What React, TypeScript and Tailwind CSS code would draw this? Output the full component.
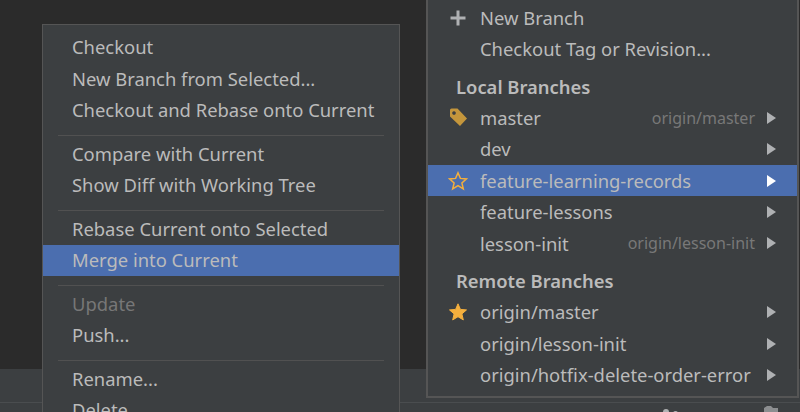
import React from 'react';

const font = "font-['Noto_Sans',sans-serif]";

type Row = { label: string; muted?: boolean; active?: boolean };

const leftGroups: Row[][] = [
    [{ label: 'Checkout' }, { label: 'New Branch from Selected...' }, { label: 'Checkout and Rebase onto Current' }],
    [{ label: 'Compare with Current' }, { label: 'Show Diff with Working Tree' }],
    [{ label: 'Rebase Current onto Selected' }, { label: 'Merge into Current', active: true }],
    [{ label: 'Update', muted: true }, { label: 'Push...' }],
    [{ label: 'Rename...' }, { label: 'Delete' }],
];

const Plus = () => (
    <svg width="16" height="16" viewBox="0 0 16 16" className="text-[#afb1b3]">
        <path d="M8 0.5v15M0.5 8h15" stroke="currentColor" strokeWidth="3" fill="none" />
    </svg>
);

const Tag = () => (
    <svg width="19" height="19" viewBox="0 0 19 19">
        <path
            fillRule="evenodd"
            fill="#c4963c"
            d="M2.5 0.5h6L18 10.5l-7 7.5L1 8.5V2a1.5 1.5 0 0 1 1.5-1.5zM5 3.2a1.8 1.8 0 1 0 .01 0z"
        />
    </svg>
);

const StarIcon = ({ filled }: { filled?: boolean }) => (
    <svg width="20" height="20" viewBox="0 0 20 20">
        <path
            d="M10 1.8l2.4 5.6 6.1.5-4.6 4 1.4 6L10 14.7l-5.3 3.2 1.4-6-4.6-4 6.1-.5z"
            fill={filled ? '#f4af3d' : 'none'}
            stroke="#f4af3d"
            strokeWidth={filled ? 1 : 1.5}
        />
    </svg>
);

const Arrow = ({ active }: { active?: boolean }) => (
    <svg width="9" height="12" viewBox="0 0 9 12" className="shrink-0">
        <path d="M0 0l9 6-9 6z" fill={active ? '#ffffff' : '#afb1b3'} />
    </svg>
);

function BranchRow({ icon, label, remote, active }: { icon?: React.ReactNode; label: string; remote?: string; active?: boolean }) {
    return (
        <div className={`flex h-[31.4px] items-center pr-[21px] ${active ? 'bg-[#4b6eaf]' : ''}`}>
            <div className="flex w-[52px] shrink-0 justify-end pr-[12px]">{icon}</div>
            <span className="flex-1 whitespace-nowrap">{label}</span>
            {remote && <span className="mr-[12px] text-[16px] text-[#787878]">{remote}</span>}
            <Arrow active={active} />
        </div>
    );
}

const Heading = ({ children }: { children: string }) => (
    <div className="flex h-[31.4px] items-center pl-[28px] font-semibold">{children}</div>
);

export default function App() {
    return (
        <div className={`relative flex h-[412px] w-[800px] flex-col overflow-hidden bg-[#2b2b2b] text-[18.4px] text-[#bbbbbb] ${font}`}>
            <div className="flex-1" />
            <div className="h-[34px] border-b border-[#4a4d4f] bg-[#3c3f41]" />
            <div className="relative h-[9px] bg-[#3c3f41]">
                {/* tops of the toolbar icons, clipped by the window */}
                <div className="absolute left-[663px] top-[6px] h-[6px] w-[6px] rounded-full bg-[#afb1b3]" />
                <div className="absolute left-[673px] top-[8px] h-[6px] w-[5px] rounded-full bg-[#afb1b3]" />
                <svg width="16" height="6" viewBox="0 0 16 6" className="absolute left-[763px] top-[3px]">
                    <path d="M1 6V2l3-2h4l2 2h5v4z" fill="#8c8e90" />
                </svg>
            </div>

            {/* branch actions popup */}
            <div className="absolute left-[42px] top-[24px] w-[358px] border border-[#555555] bg-[#3c3f41] pt-[6.5px]">
                {leftGroups.map((group, i) => (
                    <div key={i}>
                        {i > 0 && (
                            <div className="h-[12px] px-[15px] pt-[9px]">
                                <div className="h-px w-full bg-[#515151]" />
                            </div>
                        )}
                        {group.map((row) => (
                            <div
                                key={row.label}
                                className={`flex h-[31.5px] items-center pl-[29px] ${row.active ? 'bg-[#4b6eaf]' : ''} ${row.muted ? 'text-[#777777]' : ''}`}
                            >
                                {row.label}
                            </div>
                        ))}
                    </div>
                ))}
            </div>

            {/* branches popup */}
            <div className="absolute left-[426px] top-[-20px] w-[373px] border-2 border-[#555555] bg-[#3c3f41] pt-[20px] pb-[5.5px]">
                <div className="flex h-[31.4px] items-center">
                    <div className="flex w-[52px] shrink-0 justify-end pr-[14px]"><Plus /></div>
                    <span>New Branch</span>
                </div>
                <div className="flex h-[31.4px] items-center pl-[52px]">Checkout Tag or Revision...</div>
                <div className="h-[6px]" />
                <Heading>Local Branches</Heading>
                <BranchRow icon={<Tag />} label="master" remote="origin/master" />
                <BranchRow label="dev" />
                <BranchRow icon={<StarIcon />} label="feature-learning-records" active />
                <BranchRow label="feature-lessons" />
                <BranchRow label="lesson-init" remote="origin/lesson-init" />
                <div className="h-[6px]" />
                <Heading>Remote Branches</Heading>
                <BranchRow icon={<StarIcon filled />} label="origin/master" />
                <BranchRow label="origin/lesson-init" />
                <BranchRow label="origin/hotfix-delete-order-error" />
            </div>
        </div>
    );
}
